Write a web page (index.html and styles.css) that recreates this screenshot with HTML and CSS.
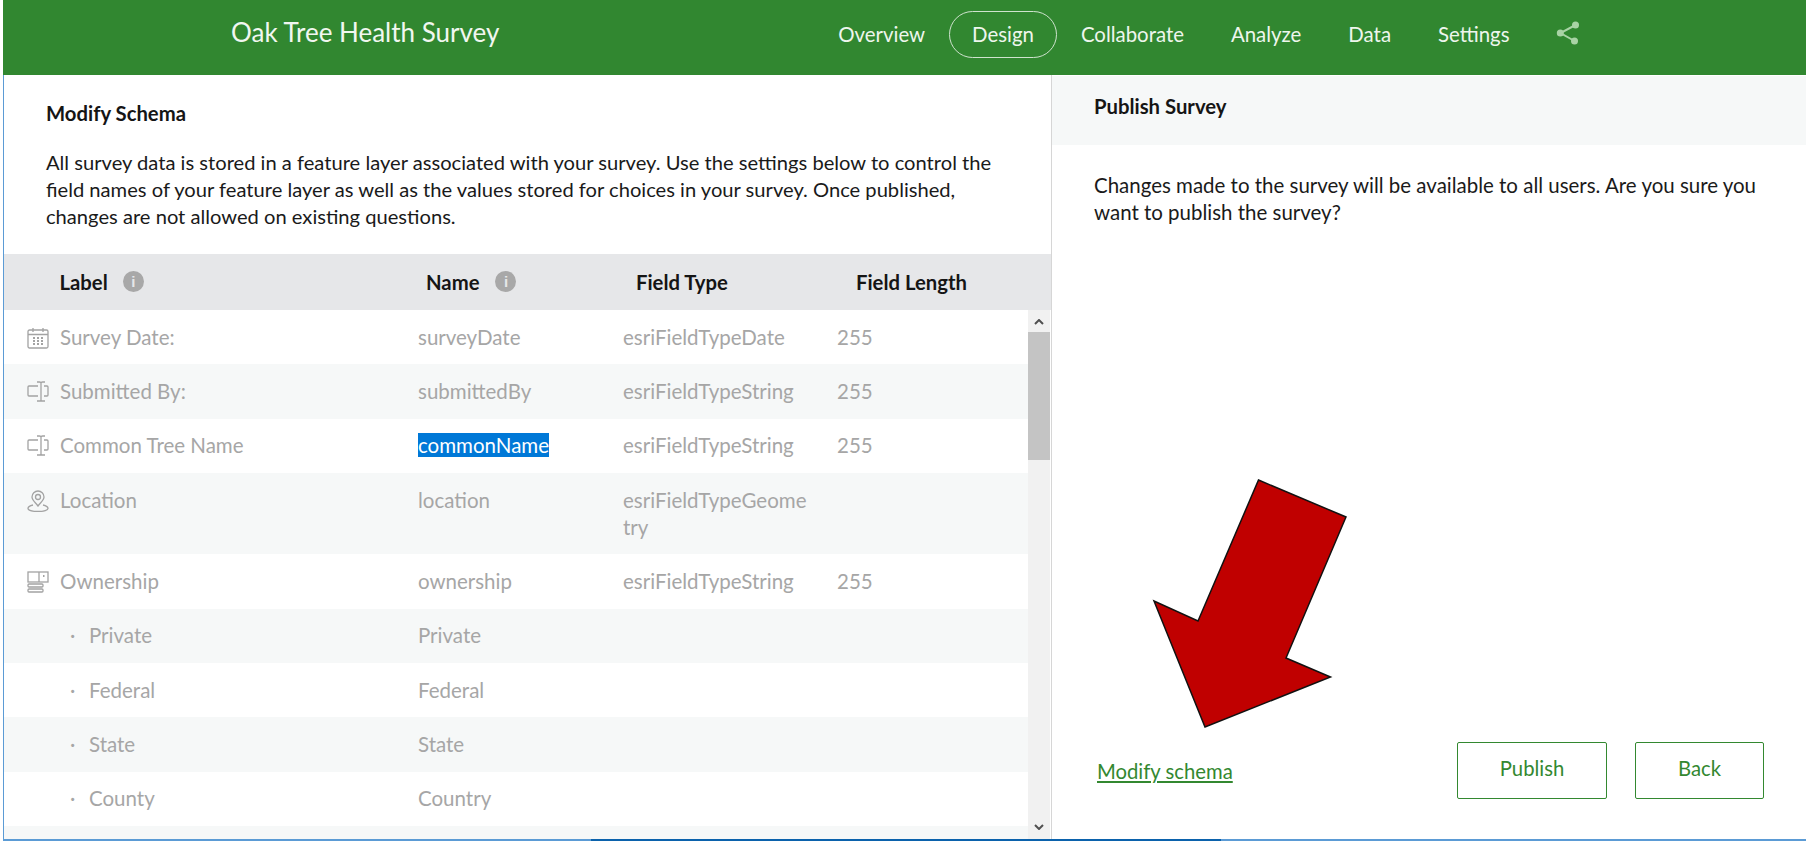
FILE: index.html
```html
<!DOCTYPE html>
<html lang="en">
<head>
<meta charset="utf-8">
<title>Oak Tree Health Survey</title>
<link rel="stylesheet" href="styles.css">
</head>
<body>
<div class="window">
  <header class="topbar">
    <div class="title">Oak Tree Health Survey</div>
    <nav class="nav">
      <a class="nav-item">Overview</a>
      <a class="nav-item active">Design</a>
      <a class="nav-item">Collaborate</a>
      <a class="nav-item">Analyze</a>
      <a class="nav-item">Data</a>
      <a class="nav-item">Settings</a>
      <svg class="share" viewBox="0 0 23 24"><path d="M19 4 4 12l14 8" fill="none" stroke="currentColor" stroke-width="2"/><circle cx="19" cy="4" r="3.500" fill="currentColor"/><circle cx="3.800" cy="12" r="3.500" fill="currentColor"/><circle cx="18" cy="20" r="3.500" fill="currentColor"/></svg>
    </nav>
  </header>
  <main class="main">
    <section class="left">
      <div class="intro">
        <h2 class="heading">Modify Schema</h2>
        <p class="desc">All survey data is stored in a feature layer associated with your survey. Use the settings below to control the field names of your feature layer as well as the values stored for choices in your survey. Once published, changes are not allowed on existing questions.</p>
      </div>
      <div class="thead">
        <div class="th c-label">Label <span class="info">i</span></div>
        <div class="th c-name">Name <span class="info">i</span></div>
        <div class="th c-type">Field Type</div>
        <div class="th c-len">Field Length</div>
      </div>
      <div class="tbody">
        <div class="rows">
          <div class="row">
            <div class="c-icon"><svg class="ico" viewBox="0 0 22 22"><rect x="1" y="3" width="20" height="18" rx="1.500"/><path d="M1 7.500h20M6 1v4M16 1v4"/><path class="dots" d="M6 11h2M10 11h2M14 11h2M6 14h2M10 14h2M14 14h2M6 17h2M10 17h2M14 17h2"/></svg></div>
            <div class="c-labeltext">Survey Date:</div><div class="c-n">surveyDate</div><div class="c-t">esriFieldTypeDate</div><div class="c-l">255</div>
          </div>
          <div class="row">
            <div class="c-icon"><svg class="ico" viewBox="0 0 22 22"><path d="M11 5H2a1 1 0 0 0-1 1v8a1 1 0 0 0 1 1h9M17 5h3a1 1 0 0 1 1 1v8a1 1 0 0 1-1 1h-3M10 1h2.500q1.500 0 1.500 1v17q0 1-1.500 1H10M14 2q0-1 1.500-1H18M14 19q0 1 1.500 1H18"/></svg></div>
            <div class="c-labeltext">Submitted By:</div><div class="c-n">submittedBy</div><div class="c-t">esriFieldTypeString</div><div class="c-l">255</div>
          </div>
          <div class="row">
            <div class="c-icon"><svg class="ico" viewBox="0 0 22 22"><path d="M11 5H2a1 1 0 0 0-1 1v8a1 1 0 0 0 1 1h9M17 5h3a1 1 0 0 1 1 1v8a1 1 0 0 1-1 1h-3M10 1h2.500q1.500 0 1.500 1v17q0 1-1.500 1H10M14 2q0-1 1.500-1H18M14 19q0 1 1.500 1H18"/></svg></div>
            <div class="c-labeltext">Common Tree Name</div><div class="c-n"><span class="selected">commonName</span></div><div class="c-t">esriFieldTypeString</div><div class="c-l">255</div>
          </div>
          <div class="row">
            <div class="c-icon"><svg class="ico" viewBox="0 0 22 22"><path d="M11 16C8 12 5 10 5 7a6 6 0 0 1 12 0c0 3-3 5-6 9Z"/><circle cx="11" cy="7" r="2.500"/><path d="M6 15c-3 .7-5 2-5 3.500C1 20 5 21.500 11 21.500S21 20 21 18.500c0-1.500-2-2.800-5-3.500"/></svg></div>
            <div class="c-labeltext">Location</div><div class="c-n">location</div><div class="c-t">esriFieldTypeGeometry</div><div class="c-l"></div>
          </div>
          <div class="row">
            <div class="c-icon"><svg class="ico" viewBox="0 0 22 22"><rect x="1" y="1" width="20" height="10"/><path d="M12 1v10"/><path class="dots" d="M16 5h1.500"/><rect x="1" y="13" width="15" height="3" rx="1"/><rect x="1" y="18" width="15" height="3" rx="1"/></svg></div>
            <div class="c-labeltext">Ownership</div><div class="c-n">ownership</div><div class="c-t">esriFieldTypeString</div><div class="c-l">255</div>
          </div>
          <div class="row">
            <div class="c-choice"><span class="bullet">·</span>Private</div><div class="c-n">Private</div><div class="c-t"></div><div class="c-l"></div>
          </div>
          <div class="row">
            <div class="c-choice"><span class="bullet">·</span>Federal</div><div class="c-n">Federal</div><div class="c-t"></div><div class="c-l"></div>
          </div>
          <div class="row">
            <div class="c-choice"><span class="bullet">·</span>State</div><div class="c-n">State</div><div class="c-t"></div><div class="c-l"></div>
          </div>
          <div class="row">
            <div class="c-choice"><span class="bullet">·</span>County</div><div class="c-n">Country</div><div class="c-t"></div><div class="c-l"></div>
          </div>
          <div class="row"></div>
        </div>
        <div class="scrollbar">
          <svg class="sb-arrow" viewBox="0 0 10 6"><path d="M1 5l4-4 4 4"/></svg>
          <div class="sb-track"><div class="sb-thumb"></div></div>
          <svg class="sb-arrow" viewBox="0 0 10 6"><path d="M1 1l4 4 4-4"/></svg>
        </div>
      </div>
    </section>
    <aside class="right">
      <div class="band">Publish Survey</div>
      <p class="confirm">Changes made to the survey will be available to all users. Are you sure you want to publish the survey?</p>
      <div class="actions">
        <a class="link">Modify schema</a>
        <div class="buttons">
          <button class="btn btn-publish">Publish</button>
          <button class="btn btn-back">Back</button>
        </div>
      </div>
    </aside>
  </main>
</div>
<svg class="arrow" viewBox="0 0 1806 848"><polygon points="1258.500,480 1346,517 1286,658 1330.500,677 1205,727 1154,601 1198,621"/></svg>
</body>
</html>
```
FILE: styles.css
```css
* { box-sizing: border-box; }
html, body { margin: 0; height: 100%; }
body { background: #fff; font-family: "Lato", "Liberation Sans", sans-serif; font-size: 20.300px; line-height: 27px; color: #1a1a1a; overflow: hidden; position: relative; }
.window { margin-left: 3px; height: 841px; border-left: 1px solid #5b9bd5; border-bottom: 2px solid #5b9bd5; display: flex; flex-direction: column; position: relative; }
.window::after { content: ""; position: absolute; left: 587px; width: 630px; bottom: -2px; height: 2px; background: #0b62ac; }
.topbar { height: 75px; margin-left: -1px; flex: none; background: #318730; color: #fff; display: flex; align-items: center; padding-left: 228px; }
.title { font-size: 26px; color: #f1f7f0; margin-top: -10px; }
.nav { display: flex; align-items: center; margin-left: auto; margin-right: 226px; margin-top: -6px; }
.nav-item { color: #eef6ed; font-size: 20.400px; padding: 0 22.500px; height: 47px; line-height: 45px; border: 1px solid transparent; border-radius: 24px; }
.nav-item.active { border-color: #cfe3ce; }
.share { width: 24px; height: 24px; margin-left: 23px; color: #a9d3a5; margin-top: -4px; }
.main { flex: 1; display: flex; min-height: 0; }
.left { width: 1048px; flex: none; display: flex; flex-direction: column; border-right: 1px solid #d6d6d6; min-height: 0; }
.intro { padding: 25px 42px 0; height: 179px; flex: none; }
.heading { font-size: inherit; font-weight: 700; margin: 0 0 22px; line-height: 27px; color: #151515; }
.desc { margin: 0; width: 965px; font-size: 20.150px; }
.thead { height: 56px; flex: none; background: #e6e7e9; display: flex; align-items: center; font-weight: 700; color: #151515; padding-top: 1px; }
.th { display: flex; align-items: center; }
.c-label { width: 422px; padding-left: 55.500px; gap: 15px; }
.c-name { width: 210px; gap: 16px; }
.c-type { width: 220px; }
.info { width: 21px; height: 21px; margin-top: -2px; border-radius: 50%; background: #a8a8a8; color: #e6e7e9; font-size: 15px; line-height: 21px; text-align: center; font-weight: 700; font-family: "Liberation Sans", sans-serif; }
.tbody { flex: 1; display: flex; min-height: 0; overflow: hidden; }
.rows { flex: 1; min-width: 0; color: #a6a6a6; font-size: 20.500px; }
.row { display: flex; min-height: 54.350px; padding: 13.675px 0; }
.row:nth-child(even) { background: #f6f8f8; }
.c-icon { width: 56px; padding-left: 23px; flex: none; }
.c-labeltext { width: 358px; flex: none; }
.c-choice { width: 414px; flex: none; padding-left: 65px; }
.bullet { display: inline-block; width: 20px; margin-left: 1px; margin-right: -1px; }
.c-n { width: 205px; flex: none; }
.c-t { width: 214px; flex: none; padding-right: 26px; overflow-wrap: anywhere; }
.c-l { flex: none; }
.selected { background: #0078d7; color: #fff; }
.ico { width: 22px; height: 22px; display: block; margin-top: 3px; fill: none; stroke: #a3a3a3; stroke-width: 1.300; }
.ico .dots { stroke-width: 1.800; }
.scrollbar { width: 22px; flex: none; background: #f1f1f1; display: flex; flex-direction: column; align-items: center; margin-right: 1px; }
.sb-arrow { width: 10px; height: 6px; margin: 9px 0; flex: none; fill: none; stroke: #505050; stroke-width: 2; }
.sb-track { flex: 1; width: 100%; }
.sb-thumb { height: 128px; margin-top: -2px; background: #c4c4c4; }
.right { flex: 1; min-width: 0; display: flex; flex-direction: column; padding-top: 1px; }
.band { height: 69px; flex: none; background: #f6f8f8; padding: 17px 42px 0; font-weight: 700; color: #151515; }
.confirm { margin: 27px 42px 0; width: 680px; font-size: 20.480px; }
.actions { margin-top: auto; padding: 0 42px 40px 45px; display: flex; align-items: flex-start; justify-content: space-between; }
.link { color: #338830; text-decoration: underline; margin-top: 16px; }
.buttons { display: flex; gap: 28px; }
.btn { height: 57px; font: inherit; color: #338830; background: #fff; border: 1px solid #338830; border-radius: 2px; padding: 0 0 4px; }
.btn-publish { width: 150px; }
.btn-back { width: 129px; }
.arrow { position: absolute; left: 0; top: 0; width: 1806px; height: 848px; pointer-events: none; }
.arrow polygon { fill: #c00000; stroke: #111; stroke-width: 1.500; }
```
